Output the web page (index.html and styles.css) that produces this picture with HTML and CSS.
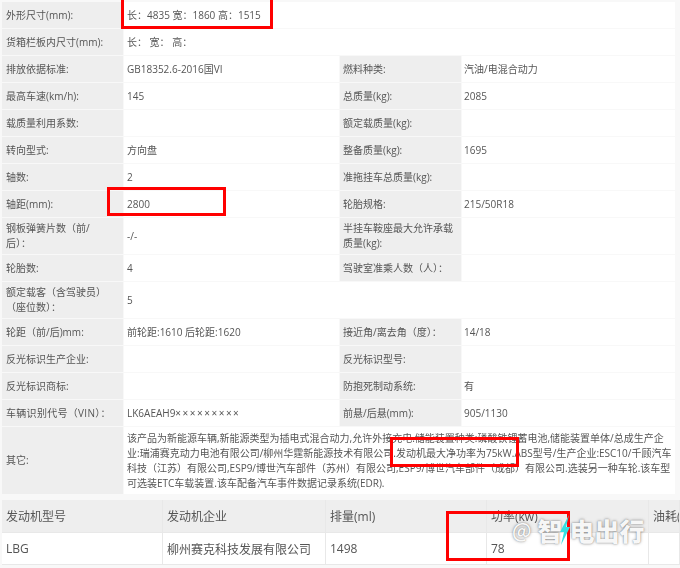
FILE: index.html
```html
<!DOCTYPE html>
<html lang="zh-CN">
<head>
<meta charset="utf-8">
<title>车辆参数</title>
<link rel="stylesheet" href="styles.css">
</head>
<body>
<div class="page">
<table class="spec">
<colgroup><col class="c1"><col class="c2"><col class="c3"><col class="c4"></colgroup>
<tr><th>外形尺寸(mm):</th><td colspan="3">长：4835 宽：1860 高：1515</td></tr>
<tr><th>货箱栏板内尺寸(mm):</th><td colspan="3">长： 宽： 高：</td></tr>
<tr><th>排放依据标准:</th><td>GB18352.6-2016国VI</td><th>燃料种类:</th><td>汽油/电混合动力</td></tr>
<tr><th>最高车速(km/h):</th><td>145</td><th>总质量(kg):</th><td>2085</td></tr>
<tr><th>载质量利用系数:</th><td></td><th>额定载质量(kg):</th><td></td></tr>
<tr><th>转向型式:</th><td>方向盘</td><th>整备质量(kg):</th><td>1695</td></tr>
<tr><th>轴数:</th><td>2</td><th>准拖挂车总质量(kg):</th><td></td></tr>
<tr><th>轴距(mm):</th><td>2800</td><th>轮胎规格:</th><td>215/50R18</td></tr>
<tr class="tall"><th>钢板弹簧片数（前/<br>后）：</th><td>-/-</td><th>半挂车鞍座最大允许承载<br>质量(kg):</th><td></td></tr>
<tr><th>轮胎数:</th><td>4</td><th>驾驶室准乘人数（人）：</th><td></td></tr>
<tr class="tall"><th>额定载客（含驾驶员）<br>（座位数）：</th><td colspan="3">5</td></tr>
<tr><th>轮距（前/后)mm:</th><td>前轮距:1610 后轮距:1620</td><th>接近角/离去角（度）：</th><td>14/18</td></tr>
<tr><th>反光标识生产企业:</th><td></td><th>反光标识型号:</th><td></td></tr>
<tr><th>反光标识商标:</th><td></td><th>防抱死制动系统:</th><td>有</td></tr>
<tr><th class="vin">车辆识别代号（VIN）：</th><td>LK6AEAH9<span class="masked">×××××××××</span></td><th>前悬/后悬(mm):</th><td>905/1130</td></tr>
<tr class="note"><th>其它:</th><td colspan="3">该产品为新能源车辆,新能源类型为插电式混合动力,允许外接充电.储能装置种类:磷酸铁锂蓄电池,储能装置单体/总成生产企<br>业:瑞浦赛克动力电池有限公司/柳州华霆新能源技术有限公司.发动机最大净功率为75kW.ABS型号/生产企业:ESC10/千顾汽车<br>科技（江苏）有限公司,ESP9/博世汽车部件（苏州）有限公司,ESP9/博世汽车部件（成都）有限公司.选装另一种车轮.该车型<br>可选装ETC车载装置.该车配备汽车事件数据记录系统(EDR).</td></tr>
</table>
<table class="engine">
<colgroup><col class="e1"><col class="e2"><col class="e3"><col class="e4"><col class="e5"></colgroup>
<tr><th>发动机型号</th><th>发动机企业</th><th>排量(ml)</th><th>功率(kw)</th><th>油耗(</th></tr>
<tr><td>LBG</td><td>柳州赛克科技发展有限公司</td><td>1498</td><td>78</td><td></td></tr>
</table>
<div class="mark mark-dims"></div>
<div class="mark mark-base"></div>
<div class="mark mark-power"></div>
<div class="mark mark-engine"></div>
<div class="wm"><span class="wm-at">@</span><span>智</span><svg class="bolt" viewBox="0 0 10 30" width="10" height="30"><path d="M9 0 0 17h4L1 30l9-18H6z" fill="#35dfe0"/></svg><span>电出行</span></div>
</div>
</body>
</html>
```
FILE: styles.css
```css
html, body { margin: 0; padding: 0; background: #fff; }
.page {
  position: relative;
  width: 680px;
  height: 568px;
  overflow: hidden;
  background: #f8f8f8;
  font-family: "Open Sans", "Noto Sans CJK SC", sans-serif;
  color: #555;
}
table { border-collapse: separate; table-layout: fixed; }
.spec {
  width: 675px;
  margin-left: 1px;
  margin-top: 1px;
  border-spacing: 1px;
  font-size: 10px;
  background: #f8f8f8;
  filter: blur(.3px);
}
.c1 { width: 121px; }
.c2 { width: 215px; }
.c3 { width: 121px; }
.c4 { width: 213px; }
.spec th, .spec td { padding: 0 4px; line-height: 15px; height: 26px; text-align: left; font-weight: 400; box-sizing: border-box; }
.spec th { background: #eeeeee; }
.spec th + td + th { padding-left: 3px; }
.spec td { background: #fff; padding-left: 3px; }
.spec th + td + th + td { padding-left: 2px; }
.spec .vin { letter-spacing: .3px; white-space: nowrap; }
.masked { letter-spacing: 1.5px; }
.spec .tall th, .spec .tall td { height: 36px; }
.spec .note th, .spec .note td { height: 67px; line-height: 15px; }
.spec .note td { white-space: nowrap; }
.engine {
  width: 678px;
  margin: 5px 0 0 2px;
  border-spacing: 0;
  font-size: 12px;
  background: #fff;
  filter: blur(.3px);
}
.e1 { width: 161px; }
.e2 { width: 163px; }
.e3 { width: 161px; }
.e4 { width: 162px; }
.e5 { width: 31px; }
.engine th, .engine td { height: 32px; padding: 0 4px; text-align: left; font-weight: 400; box-sizing: border-box; border-right: 1px solid #e8e8e8; border-bottom: 1px solid #e8e8e8; white-space: nowrap; overflow: hidden; }
.engine th { background: #eeeeee; height: 33px; }
.mark { position: absolute; border: 3px solid #f00; box-sizing: border-box; }
.mark-dims { left: 121px; top: -3px; width: 152px; height: 32px; }
.mark-base { left: 107px; top: 187px; width: 119px; height: 29px; }
.mark-power { left: 390px; top: 437px; width: 129px; height: 30px; }
.mark-engine { left: 446px; top: 511px; width: 124px; height: 50px; }
.wm {
  position: absolute;
  left: 512px;
  top: 515px;
  display: flex;
  align-items: center;
  height: 30px;
  color: rgba(255,255,255,.95);
  font-family: "Noto Sans CJK SC", sans-serif;
  font-size: 25px;
  font-weight: 900;
  line-height: 30px;
  text-shadow: 0 0 3px rgba(60,60,60,.55), 0 0 1px rgba(60,60,60,.4);
}
.wm-at { font-size: 20px; font-weight: 500; margin-right: 6px; }
.bolt { margin: 0 -1px 0 -2px; position: relative; z-index: 1; }
```
